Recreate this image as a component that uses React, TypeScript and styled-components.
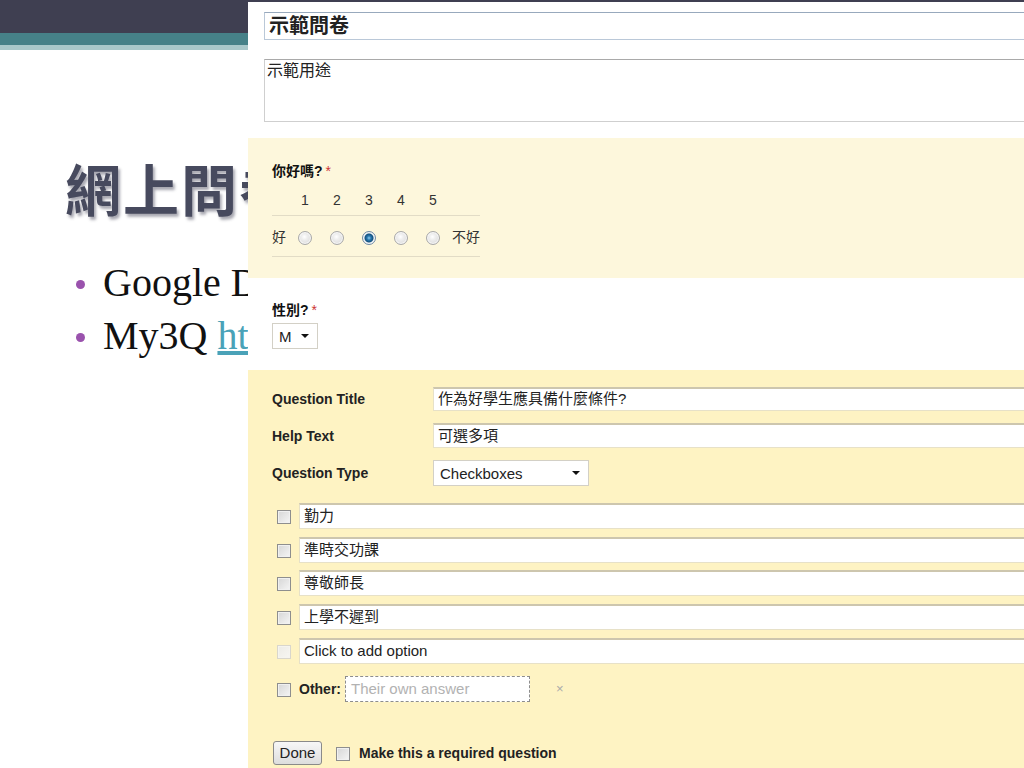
import React from 'react'
import styled, { createGlobalStyle } from 'styled-components'

const GlobalStyle = createGlobalStyle`
  html, body {
    margin: 0;
    padding: 0;
    background: #ffffff;
  }
  body {
    font-family: "Liberation Sans", "Noto Sans CJK TC", sans-serif;
  }
`

const UI_FONT = `"Liberation Sans", "Noto Sans CJK TC", Arial, sans-serif`

const Slide = styled.div`
  position: relative;
  width: 1024px;
  height: 768px;
  overflow: hidden;
  background: #ffffff;
`

const Band = styled.div<{ $h: number; $c: string }>`
  height: ${p => p.$h}px;
  background: ${p => p.$c};
`

const SlideBody = styled.div`
  padding: 106px 0 0 65px;
`

const SlideTitle = styled.h1`
  margin: 0;
  font-family: "Noto Sans CJK TC", sans-serif;
  font-size: 56px;
  font-weight: 700;
  line-height: 62px;
  letter-spacing: 2px;
  color: #474a5e;
  text-shadow: 2px 3px 3px rgba(60, 60, 80, 0.45);
`

const BulletList = styled.ul`
  list-style: none;
  margin: 38px 0 0 0;
  padding: 0 0 0 11px;
`

const Bullet = styled.li`
  display: flex;
  align-items: center;
  gap: 18px;
  height: 53px;
  font-family: "Liberation Serif", "Noto Sans CJK TC", serif;
  font-size: 40px;
  color: #111;
  white-space: nowrap;
  &::before {
    content: '';
    display: block;
    width: 9px;
    height: 9px;
    margin-top: 4px;
    border-radius: 50%;
    background: #9a52ad;
    flex: none;
  }
`

const SlideLink = styled.span`
  color: #4aa2b8;
  text-decoration: underline;
`

/* ---- screenshot of the form editor lying over the slide ---- */

const FormShot = styled.div`
  position: absolute;
  left: 248px;
  top: 2px;
  right: 0;
  bottom: 0;
  overflow: hidden;
  background: #ffffff;
  font-family: ${UI_FONT};
  color: #222;
`

const HeaderSection = styled.div`
  padding: 10px 0 16px 16px;
`

const TitleField = styled.div`
  box-sizing: border-box;
  width: 900px;
  height: 28px;
  border: 1px solid #bac8d8;
  border-top-color: #98a9bd;
  padding: 0 4px;
  font-size: 20px;
  font-weight: 700;
  line-height: 26px;
`

const DescField = styled.div`
  box-sizing: border-box;
  width: 900px;
  height: 63px;
  margin-top: 19px;
  border: 1px solid #cfcfcf;
  border-top-color: #a9a9a9;
  padding: 2px 2px;
  font-size: 16px;
  line-height: 18px;
`

const Section = styled.div<{ $bg: string; $h?: number }>`
  background: ${p => p.$bg};
  ${p => (p.$h ? `height: ${p.$h}px;` : '')}
  box-sizing: border-box;
  padding: 0 0 0 24px;
`

const QLabel = styled.div<{ $top: number }>`
  padding-top: ${p => p.$top}px;
  font-size: 14px;
  font-weight: 700;
  line-height: 18px;
  color: #111;
`

const Star = styled.span`
  color: #cc3333;
  margin-left: 3px;
  font-weight: 400;
`

const ScaleRow = styled.div<{ $h: number }>`
  display: grid;
  grid-template-columns: 17px repeat(5, 32px) 31px;
  align-items: center;
  width: 208px;
  height: ${p => p.$h}px;
  border-bottom: 1px solid #e2dcc6;
  font-size: 14px;
  color: #333;
`

const ScaleCell = styled.div<{ $align?: string }>`
  display: flex;
  justify-content: ${p => p.$align || 'center'};
  align-items: center;
`

const Radio = styled.span<{ $on?: boolean }>`
  display: block;
  box-sizing: border-box;
  width: 14px;
  height: 14px;
  margin-top: 3px;
  border-radius: 50%;
  border: 1px solid ${p => (p.$on ? '#6f8aa3' : '#a9a9a9')};
  background: ${p =>
    p.$on
      ? 'radial-gradient(circle at 50% 50%, #8fd0f4 0, #2a79b0 2px, #14527f 4px, #dfe6ec 5px, #f4f6f8 100%)'
      : 'radial-gradient(circle at 45% 40%, #ffffff 0, #eeeeee 3px, #d5d5d5 100%)'};
  box-shadow: inset 0 0 0 1px rgba(255, 255, 255, 0.7);
`

const SelectBox = styled.div<{ $w: number; $h: number }>`
  box-sizing: border-box;
  display: flex;
  align-items: center;
  justify-content: space-between;
  width: ${p => p.$w}px;
  height: ${p => p.$h}px;
  padding: 0 8px 0 6px;
  background: #ffffff;
  border: 1px solid #d3d0c6;
  font-size: 15px;
  color: #222;
`

const Caret = styled.span`
  width: 0;
  height: 0;
  border-left: 4px solid transparent;
  border-right: 4px solid transparent;
  border-top: 4px solid #111;
`

const EditGrid = styled.div`
  display: grid;
  grid-template-columns: 161px 700px;
  row-gap: 12px;
  align-items: center;
  padding-top: 17px;
`

const FieldLabel = styled.div`
  font-size: 14px;
  font-weight: 700;
  color: #222;
`

const TextField = styled.div<{ $h: number; $w?: number }>`
  box-sizing: border-box;
  flex: none;
  width: ${p => p.$w || 700}px;
  height: ${p => p.$h}px;
  background: #ffffff;
  border: 1px solid #e7e1c8;
  border-top: 2px solid #cdc6ae;
  padding: 0 4px;
  font-size: 15px;
  line-height: ${p => p.$h - 4}px;
  color: #222;
  white-space: nowrap;
`

const Options = styled.div`
  display: flex;
  flex-direction: column;
  gap: 7.7px;
  margin-top: 17px;
  padding-left: 5px;
`

const OptionRow = styled.div`
  display: flex;
  align-items: center;
  gap: 8px;
`

const Check = styled.span<{ $faded?: boolean }>`
  display: block;
  flex: none;
  box-sizing: border-box;
  width: 14px;
  height: 14px;
  margin-top: 2px;
  border: 1px solid ${p => (p.$faded ? '#d9d6cc' : '#8e8e8e')};
  background: ${p =>
    p.$faded
      ? 'linear-gradient(135deg, #ecebe6, #f7f6f2)'
      : 'linear-gradient(135deg, #d6d6d6, #f5f5f5)'};
  box-shadow: inset 0 0 0 1px ${p => (p.$faded ? '#f5f4ef' : '#f0f0f0')};
`

const OtherRow = styled.div`
  display: flex;
  align-items: center;
  margin-top: 12px;
  padding-left: 5px;
`

const OtherLabel = styled.span`
  margin-left: 8px;
  font-size: 14px;
  font-weight: 700;
  color: #222;
`

const DashedField = styled.div`
  box-sizing: border-box;
  width: 185px;
  height: 26px;
  margin-left: 4px;
  border: 1px dashed #8d8d8d;
  background: #ffffff;
  padding: 0 5px;
  font-size: 15px;
  line-height: 24px;
  color: #b2b2b2;
`

const RemoveX = styled.span`
  margin-left: 26px;
  font-size: 13px;
  color: #aaaaaa;
`

const FooterRow = styled.div`
  display: flex;
  align-items: center;
  gap: 14px;
  margin-top: 39px;
  padding-left: 1px;
`

const DoneButton = styled.button`
  box-sizing: border-box;
  width: 49px;
  height: 24px;
  padding: 0;
  border: 1px solid #8a8a8a;
  border-radius: 3px;
  background: linear-gradient(#f7f7f7, #dddddd);
  font-family: ${UI_FONT};
  font-size: 15px;
  color: #222;
`

const RequiredLabel = styled.span`
  margin-left: -5px;
  font-size: 14px;
  font-weight: 700;
  color: #222;
`

const scale = [1, 2, 3, 4, 5]
const options = ['勤力', '準時交功課', '尊敬師長', '上學不遲到']

export default function App() {
  return (
    <>
      <GlobalStyle />
      <Slide>
        <Band $h={33} $c="#3f3f51" />
        <Band $h={12} $c="#468188" />
        <Band $h={5} $c="#a9c8ca" />
        <SlideBody>
          <SlideTitle>網上問卷</SlideTitle>
          <BulletList>
            <Bullet>Google Docs</Bullet>
            <Bullet>
              <span>
                My3Q <SlideLink>http://www.my3q.com</SlideLink>
              </span>
            </Bullet>
          </BulletList>
        </SlideBody>

        <FormShot>
          <HeaderSection>
            <TitleField>示範問卷</TitleField>
            <DescField>示範用途</DescField>
          </HeaderSection>

          <Section $bg="#fdf7dc" $h={140}>
            <QLabel $top={24}>
              你好嗎?<Star>*</Star>
            </QLabel>
            <div style={{ height: 4 }} />
            <ScaleRow $h={31}>
              <ScaleCell />
              {scale.map(n => (
                <ScaleCell key={n}>{n}</ScaleCell>
              ))}
              <ScaleCell />
            </ScaleRow>
            <ScaleRow $h={40}>
              <ScaleCell $align="flex-start">好</ScaleCell>
              {scale.map(n => (
                <ScaleCell key={n}>
                  <Radio $on={n === 3} />
                </ScaleCell>
              ))}
              <ScaleCell $align="flex-end">不好</ScaleCell>
            </ScaleRow>
          </Section>

          <Section $bg="#ffffff" $h={92}>
            <QLabel $top={23}>
              性別?<Star>*</Star>
            </QLabel>
            <div style={{ height: 4 }} />
            <SelectBox $w={46} $h={26}>
              M <Caret />
            </SelectBox>
          </Section>

          <Section $bg="#fef3c3" $h={400}>
            <EditGrid>
              <FieldLabel>Question Title</FieldLabel>
              <TextField $h={24}>作為好學生應具備什麼條件?</TextField>
              <FieldLabel>Help Text</FieldLabel>
              <TextField $h={25}>可選多項</TextField>
              <FieldLabel>Question Type</FieldLabel>
              <SelectBox $w={156} $h={26}>
                Checkboxes <Caret />
              </SelectBox>
            </EditGrid>

            <Options>
              {options.map(o => (
                <OptionRow key={o}>
                  <Check />
                  <TextField $h={26} $w={800}>
                    {o}
                  </TextField>
                </OptionRow>
              ))}
              <OptionRow>
                <Check $faded />
                <TextField $h={26} $w={800}>
                  Click to add option
                </TextField>
              </OptionRow>
            </Options>

            <OtherRow>
              <Check />
              <OtherLabel>Other:</OtherLabel>
              <DashedField>Their own answer</DashedField>
              <RemoveX>×</RemoveX>
            </OtherRow>

            <FooterRow>
              <DoneButton>Done</DoneButton>
              <Check />
              <RequiredLabel>Make this a required question</RequiredLabel>
            </FooterRow>
          </Section>
        </FormShot>
      </Slide>
    </>
  )
}
